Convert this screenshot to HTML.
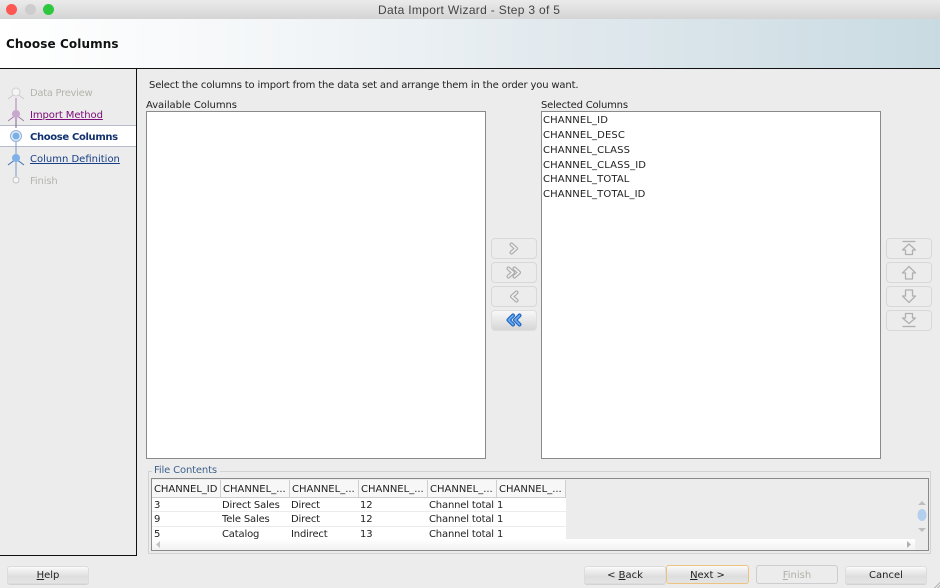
<!DOCTYPE html>
<html><head><meta charset="utf-8">
<style>
html,body{margin:0;padding:0;width:940px;height:588px;overflow:hidden;background:#ececec}
body{position:relative;font-family:"DejaVu Sans","Liberation Sans",sans-serif;font-size:10px;color:#222}
.a,.t{position:absolute}
.t{white-space:nowrap;line-height:14px}
.list{position:absolute;background:#fff;border:1px solid #8a8a8a;box-sizing:border-box}
.sel{letter-spacing:.12px}
.btn{position:absolute;box-sizing:border-box;height:18px;border:1px solid #dcdcdc;border-radius:3px;background:linear-gradient(#fafafa,#f0f0f0 20%,#dedede 60%,#e4e4e4);text-align:center;line-height:17px;color:#222;font-size:10px;box-shadow:0 1px 0 #d2d2d2}
.ib{position:absolute;box-sizing:border-box;left:0;width:46px;height:21px;border:1px solid #d8d8d8;border-radius:4px;background:#ececec}
u{text-underline-offset:1px}
.hd{position:absolute;top:480px;height:18px;box-sizing:border-box;border-right:1px solid #cfcfcf;border-bottom:1px solid #cfcfcf;line-height:19px;padding-left:2px;white-space:nowrap;overflow:hidden;color:#222;background:#f7f7f7}
.c{position:absolute;white-space:nowrap;line-height:14px;color:#222;letter-spacing:-.17px}
</style></head><body>
<!-- title bar -->
<div class="a" style="left:0;top:0;width:940px;height:19px;background:linear-gradient(#ebebeb,#d4d4d4);border-bottom:1px solid #bdbdbd"></div>
<div class="a" style="left:6px;top:4px;width:11px;height:11px;border-radius:50%;background:#fc5753"></div>
<div class="a" style="left:25px;top:4px;width:11px;height:11px;border-radius:50%;background:#cdcdcd"></div>
<div class="a" style="left:43px;top:4px;width:11px;height:11px;border-radius:50%;background:#2dc840"></div>
<div class="t" style="left:378px;top:3px;font-family:'Liberation Sans',sans-serif;font-size:12px;color:#444;letter-spacing:.32px">Data Import Wizard - Step 3 of 5</div>
<!-- header -->
<div class="a" style="left:0;top:19px;width:940px;height:49px;background:linear-gradient(90deg,#fff 0%,#f3f6f8 30%,#e1e9ee 60%,#c9dbe2 100%);border-bottom:1px solid #111"></div>
<div class="t" style="left:6px;top:37px;font-size:12px;font-weight:bold;color:#111;letter-spacing:.1px">Choose Columns</div>
<!-- left nav -->
<div class="a" style="left:0;top:69px;width:137px;height:487px;box-sizing:border-box;border-right:1px solid #111;border-bottom:1px solid #111"></div>
<div class="a" style="left:0;top:125px;width:136px;height:22px;box-sizing:border-box;background:#fff;border-top:1px solid #b4bccb;border-bottom:1px solid #b4bccb"></div>
<svg class="a" style="left:0;top:80px" width="30" height="110" viewBox="0 0 30 110">
<line x1="16" y1="18" x2="16" y2="34" stroke="#b07fb5" stroke-width="1"/>
<line x1="16" y1="36" x2="16" y2="48" stroke="#8a5f96" stroke-width="1"/>
<line x1="16" y1="60" x2="16" y2="100" stroke="#7a97c4" stroke-width="1"/>
<path d="M8 19L16 13L24 19" fill="none" stroke="#c9c9c9"/>
<circle cx="16" cy="12" r="4" fill="#f4f4f4" stroke="#cfcfcf"/>
<path d="M8 41L16 35L24 41" fill="none" stroke="#a77bb0"/>
<circle cx="16" cy="34" r="4" fill="#c8a8cf"/>
<circle cx="16" cy="56" r="5.500" fill="#dfeaf7" stroke="#93b1d8"/>
<circle cx="16" cy="56" r="3.500" fill="#7aaee6"/>
<path d="M8 85L16 79L24 85" fill="none" stroke="#3f6cae"/>
<circle cx="16" cy="78" r="4" fill="#7fb0e8"/>
<circle cx="16" cy="100" r="3" fill="#f6f6f6" stroke="#c4c4c4"/>
</svg>
<div class="t" style="left:30px;top:87px;color:#b5b5ad;letter-spacing:-.3px">Data Preview</div>
<div class="t" style="left:30px;top:109px;color:#7c0a78;letter-spacing:-.08px"><u>Import Method</u></div>
<div class="t" style="left:30px;top:131px;color:#12306f;font-weight:bold;letter-spacing:-.35px">Choose Columns</div>
<div class="t" style="left:30px;top:153px;color:#163f86"><u>Column Definition</u></div>
<div class="t" style="left:30px;top:175px;color:#b5b5ad;letter-spacing:-.15px">Finish</div>
<!-- main -->
<div class="t" style="left:149px;top:79px;letter-spacing:-.16px">Select the columns to import from the data set and arrange them in the order you want.</div>
<div class="t" style="left:146px;top:99px;letter-spacing:-.06px">Available Columns</div>
<div class="list" style="left:146px;top:111px;width:340px;height:348px"></div>
<div class="t" style="left:541px;top:99px;letter-spacing:-.2px">Selected Columns</div>
<div class="list" style="left:541px;top:111px;width:340px;height:348px"></div>
<div class="t sel" style="left:543px;top:114px">CHANNEL_ID</div>
<div class="t sel" style="left:543px;top:129px">CHANNEL_DESC</div>
<div class="t sel" style="left:543px;top:144px">CHANNEL_CLASS</div>
<div class="t sel" style="left:543px;top:159px">CHANNEL_CLASS_ID</div>
<div class="t sel" style="left:543px;top:173px">CHANNEL_TOTAL</div>
<div class="t sel" style="left:543px;top:188px">CHANNEL_TOTAL_ID</div>
<!-- arrow buttons -->
<div class="a" style="left:491px;top:238px;width:46px;height:93px">
<div class="ib" style="top:0"></div><div class="ib" style="top:24px"></div><div class="ib" style="top:48px"></div>
<div class="ib" style="top:72px;border-color:#dedede;background:linear-gradient(#f8f8f8,#d6d6d6)"></div>
<svg class="a" style="left:0;top:0" width="46" height="93" viewBox="0 0 46 93" fill="none" stroke-linejoin="round" stroke-linecap="round">
<g stroke="#acacac" stroke-width="4">
<path d="M20.500 6.500L25 10.500L20.500 14.500"/>
<path d="M17.500 30.500L22 34.500L17.500 38.500"/><path d="M23.500 30.500L28 34.500L23.500 38.500"/>
<path d="M25.500 54.500L21 58.500L25.500 62.500"/>
</g>
<g stroke="#efefef" stroke-width="1.700">
<path d="M20.500 6.500L25 10.500L20.500 14.500"/>
<path d="M17.500 30.500L22 34.500L17.500 38.500"/><path d="M23.500 30.500L28 34.500L23.500 38.500"/>
<path d="M25.500 54.500L21 58.500L25.500 62.500"/>
</g>
<g stroke="#1f64c0" stroke-width="4">
<path d="M22 77.500L17.500 82L22 86.500"/><path d="M28.500 77.500L24 82L28.500 86.500"/>
</g>
<g stroke="#69aef0" stroke-width="1.600">
<path d="M22 77.500L17.500 82L22 86.500"/><path d="M28.500 77.500L24 82L28.500 86.500"/>
</g>
</svg>
</div>
<div class="a" style="left:886px;top:238px;width:46px;height:93px">
<div class="ib" style="top:0"></div><div class="ib" style="top:24px"></div><div class="ib" style="top:48px"></div><div class="ib" style="top:72px"></div>
<svg class="a" style="left:0;top:0" width="46" height="93" viewBox="0 0 46 93" fill="#ededed" stroke="#b0b0b0" stroke-width="1.300" stroke-linejoin="round">
<path d="M16.500 3.500H29.500"/>
<path d="M23 6L29.500 12H26.500V16.500H19.500V12H16.500Z"/>
<path d="M23 28.500L29.500 35H26.500V41H19.500V35H16.500Z"/>
<path d="M19.500 52H26.500V58H29.500L23 64.500L16.500 58H19.500Z"/>
<path d="M19.500 75.500H26.500V80H29.500L23 85.500L16.500 80H19.500Z"/>
<path d="M16.500 88.500H29.500"/>
</svg>
</div>
<!-- file contents group -->
<div class="a" style="left:148px;top:471px;width:783px;height:83px;box-sizing:border-box;border:1px solid #d2d2d2"></div>
<div class="t" style="left:152px;top:464px;padding:0 3px 0 2px;background:#ececec;color:#3f628c;letter-spacing:-.15px">File Contents</div>
<div class="a" style="left:151px;top:478px;width:778px;height:73px;box-sizing:border-box;border:1px solid #8a8a8a;background:#ececec"></div>
<div class="a" style="left:152px;top:480px;width:414px;height:59px;background:#fff;overflow:hidden">
<div class="a" style="left:0;top:31px;width:414px;height:1px;background:#ececec"></div>
<div class="a" style="left:0;top:46px;width:414px;height:1px;background:#ececec"></div>
<div class="c" style="left:2px;top:19px">3</div><div class="c" style="left:70px;top:19px">Direct Sales</div><div class="c" style="left:139px;top:19px">Direct</div><div class="c" style="left:208px;top:19px">12</div><div class="c" style="left:277px;top:19px">Channel total</div><div class="c" style="left:345px;top:19px">1</div>
<div class="c" style="left:2px;top:33px">9</div><div class="c" style="left:70px;top:33px">Tele Sales</div><div class="c" style="left:139px;top:33px">Direct</div><div class="c" style="left:208px;top:33px">12</div><div class="c" style="left:277px;top:33px">Channel total</div><div class="c" style="left:345px;top:33px">1</div>
<div class="c" style="left:2px;top:48px">5</div><div class="c" style="left:70px;top:48px">Catalog</div><div class="c" style="left:139px;top:48px">Indirect</div><div class="c" style="left:208px;top:48px">13</div><div class="c" style="left:277px;top:48px">Channel total</div><div class="c" style="left:345px;top:48px">1</div>
</div>
<div class="hd" style="left:152px;width:69px;letter-spacing:-.05px">CHANNEL_ID</div>
<div class="hd" style="left:221px;width:69px">CHANNEL_...</div>
<div class="hd" style="left:290px;width:69px">CHANNEL_...</div>
<div class="hd" style="left:359px;width:69px">CHANNEL_...</div>
<div class="hd" style="left:428px;width:69px">CHANNEL_...</div>
<div class="hd" style="left:497px;width:69px">CHANNEL_...</div>
<!-- scrollbars -->
<div class="a" style="left:152px;top:539px;width:763px;height:11px;background:linear-gradient(#fff,#f2f2f2)"></div>
<svg class="a" style="left:152px;top:539px" width="763" height="11"><path d="M4 5.500L8 2V9Z" fill="#c4c4c4"/><path d="M759 5.500L755 2V9Z" fill="#b0b0b0"/></svg>
<svg class="a" style="left:915px;top:496px" width="14" height="44"><path d="M7 5L3 9H11Z" fill="#bdbdbd"/><ellipse cx="7" cy="19" rx="4.500" ry="6" fill="#b4cfee"/><path d="M7 36L3 32H11Z" fill="#bdbdbd"/></svg>
<!-- bottom buttons -->
<div class="btn" style="left:7px;top:566px;width:82px"><u>H</u>elp</div>
<div class="btn" style="left:584px;top:566px;width:82px">&lt; <u>B</u>ack</div>
<div class="btn" style="left:666px;top:565px;width:83px;height:19px;border:1px solid #edc27f;box-shadow:none;line-height:19px"><u>N</u>ext &gt;</div>
<div class="btn" style="left:756px;top:565px;width:82px;height:19px;background:#ececec;border-color:#cdcdcd;color:#b0b0a8;box-shadow:none;line-height:19px"><u>F</u>inish</div>
<div class="btn" style="left:845px;top:566px;width:82px">Cancel</div>
<svg class="a" style="left:934px;top:582px" width="6" height="6"><path d="M6 0V1L1 6H0ZM6 3V4L4 6H3Z" fill="#9a9a9a"/></svg>
</body></html>
